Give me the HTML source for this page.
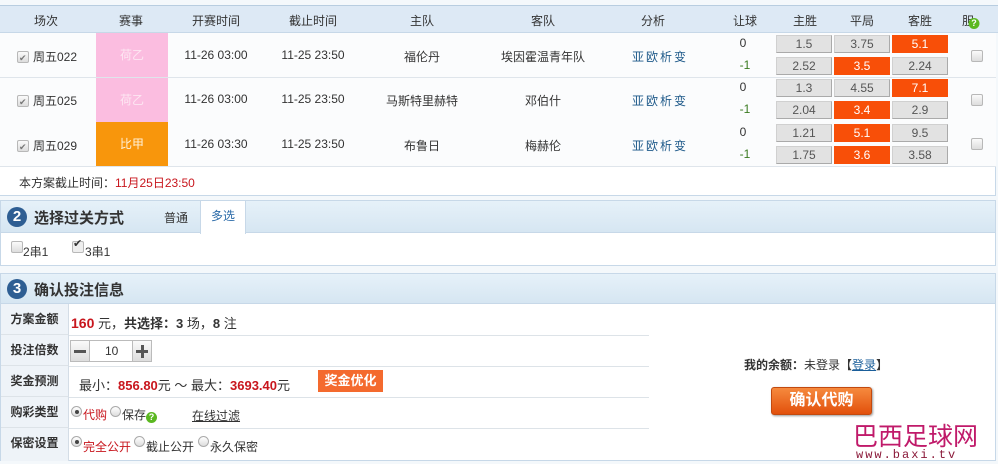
<!DOCTYPE html>
<html><head><meta charset="utf-8"><style>
*{margin:0;padding:0;box-sizing:border-box}
body{width:998px;height:464px;background:#f4f8fb;font-family:"Liberation Sans","Noto Sans CJK SC",sans-serif;font-size:12px;color:#333;position:relative;overflow:hidden}
.a{position:absolute}
.hd{left:0;top:5px;width:998px;height:28px;background:#dde9f5;border-top:1px solid #b8cde0;border-bottom:1px solid #c7d8e8}
.hd span{position:absolute;top:6px;transform:translateX(-50%);white-space:nowrap}
.row{left:0;width:996px;height:45px;background:#fbfcfd;border-bottom:1px solid #dfe5eb}
.t{position:absolute;transform:translateX(-50%);white-space:nowrap}
.lg{position:absolute;left:96px;width:72px;height:44px;top:0;color:#fff;text-align:center;line-height:44px}
.b{position:absolute;width:56px;height:18px;background:#e2e2e2;border:1px solid #d0d0d0;border-bottom-color:#aaa;border-right-color:#aaa;text-align:center;line-height:17px;color:#555;font-size:12px}
.o{background:#f84f08;border-color:#f84f08;color:#fff}
.cb{position:absolute;width:12px;height:12px;border:1px solid #b8b8b8;border-radius:2px;background:linear-gradient(#fafafa,#ddd)}
.ck{position:absolute;font-size:9px;color:#777;line-height:10px}
.sec{left:0;width:996px;border:1px solid #c7d8e8;background:#fff}
.sh{position:absolute;left:0;top:0;width:100%;height:32px;background:linear-gradient(#e6f1f9,#d6e6f2);border-bottom:1px solid #c7d8e8}
.num{position:absolute;left:6px;top:6px;width:20px;height:20px;border-radius:50%;background:#2e5e93;color:#fff;font-weight:bold;font-size:15px;text-align:center;line-height:20px}
.st{position:absolute;left:33px;top:6px;font-size:15px;font-weight:bold;color:#333}
.lab{position:absolute;left:0;width:68px;height:31px;background:#eef3f8;border-bottom:1px solid #dde3e8;border-right:1px solid #d4dde6;font-weight:bold;text-align:center;line-height:31px;font-size:12px}
.ln{position:absolute;left:68px;width:580px;height:1px;background:#dde3e8}
.r{position:absolute;width:11px;height:11px;border-radius:50%;border:1px solid #aaa;background:linear-gradient(#fff,#ddd)}
.r.on::after{content:"";position:absolute;left:3px;top:3px;width:4px;height:4px;border-radius:50%;background:#444}
.red{color:#c8161d}
.q{display:inline-block;width:11px;height:11px;border-radius:50%;background:#5bb821;color:#fff;font-size:9px;line-height:11px;text-align:center;font-weight:bold;vertical-align:-1px}
</style></head><body>
<div class="a hd">
<span style="left:46px">场次</span><span style="left:131px">赛事</span><span style="left:216px">开赛时间</span><span style="left:313px">截止时间</span><span style="left:422px">主队</span><span style="left:543px">客队</span><span style="left:653px">分析</span><span style="left:745px">让球</span><span style="left:805px">主胜</span><span style="left:862px">平局</span><span style="left:920px">客胜</span><span style="left:968px">胆<span class="q">?</span></span>
</div>

<div class="a row" style="top:33px">
<div class="cb" style="left:17px;top:18px"></div><span class="ck" style="left:19px;top:20px">✔</span><span class="t" style="left:55px;top:15px">周五022</span>
<div class="lg" style="background:#fbbde0;color:#fde6f2">荷乙</div>
<span class="t" style="left:216px;top:15px">11-26 03:00</span><span class="t" style="left:313px;top:15px">11-25 23:50</span>
<span class="t" style="left:422px;top:15px">福伦丹</span><span class="t" style="left:543px;top:15px">埃因霍温青年队</span>
<span class="t" style="left:660px;top:15px;color:#1f5a8a;letter-spacing:2px">亚欧析变</span>
<span class="t" style="left:743px;top:3px">0</span><span class="t" style="left:745px;top:25px;color:#3a7a20">-1</span>
<div class="b" style="left:776px;top:2px">1.5</div><div class="b" style="left:834px;top:2px">3.75</div><div class="b o" style="left:892px;top:2px">5.1</div>
<div class="b" style="left:776px;top:24px">2.52</div><div class="b o" style="left:834px;top:24px">3.5</div><div class="b" style="left:892px;top:24px">2.24</div>
<div class="cb" style="left:971px;top:17px"></div>
</div>
<div class="a row" style="top:78px">
<div class="cb" style="left:17px;top:17px"></div><span class="ck" style="left:19px;top:19px">✔</span><span class="t" style="left:55px;top:14px">周五025</span>
<div class="lg" style="background:#fbbde0;color:#fde6f2">荷乙</div>
<span class="t" style="left:216px;top:14px">11-26 03:00</span><span class="t" style="left:313px;top:14px">11-25 23:50</span>
<span class="t" style="left:422px;top:14px">马斯特里赫特</span><span class="t" style="left:543px;top:14px">邓伯什</span>
<span class="t" style="left:660px;top:14px;color:#1f5a8a;letter-spacing:2px">亚欧析变</span>
<span class="t" style="left:743px;top:2px">0</span><span class="t" style="left:745px;top:24px;color:#3a7a20">-1</span>
<div class="b" style="left:776px;top:1px">1.3</div><div class="b" style="left:834px;top:1px">4.55</div><div class="b o" style="left:892px;top:1px">7.1</div>
<div class="b" style="left:776px;top:23px">2.04</div><div class="b o" style="left:834px;top:23px">3.4</div><div class="b" style="left:892px;top:23px">2.9</div>
<div class="cb" style="left:971px;top:16px"></div>
</div>
<div class="a row" style="top:122px">
<div class="cb" style="left:17px;top:18px"></div><span class="ck" style="left:19px;top:20px">✔</span><span class="t" style="left:55px;top:15px">周五029</span>
<div class="lg" style="background:#f8960c;color:#fff3dc">比甲</div>
<span class="t" style="left:216px;top:15px">11-26 03:30</span><span class="t" style="left:313px;top:15px">11-25 23:50</span>
<span class="t" style="left:422px;top:15px">布鲁日</span><span class="t" style="left:543px;top:15px">梅赫伦</span>
<span class="t" style="left:660px;top:15px;color:#1f5a8a;letter-spacing:2px">亚欧析变</span>
<span class="t" style="left:743px;top:3px">0</span><span class="t" style="left:745px;top:25px;color:#3a7a20">-1</span>
<div class="b" style="left:776px;top:2px">1.21</div><div class="b o" style="left:834px;top:2px">5.1</div><div class="b" style="left:892px;top:2px">9.5</div>
<div class="b" style="left:776px;top:24px">1.75</div><div class="b o" style="left:834px;top:24px">3.6</div><div class="b" style="left:892px;top:24px">3.58</div>
<div class="cb" style="left:971px;top:16px"></div>
</div>
<div class="a" style="left:0;top:167px;width:996px;height:29px;background:#fff;border-bottom:1px solid #c7d8e8;border-right:1px solid #c7d8e8"><span class="a" style="left:19px;top:7px">本方案截止时间：<span class="red">11月25日23:50</span></span></div>

<div class="a sec" style="top:200px;height:66px">
<div class="sh"></div><div class="num">2</div><div class="st">选择过关方式</div>
<span class="a" style="left:163px;top:8px">普通</span>
<div class="a" style="left:199px;top:0;width:46px;height:33px;background:#fff;border-left:1px solid #c7d8e8;border-right:1px solid #c7d8e8;color:#2a6aa8;text-align:center;line-height:30px">多选</div>
<div class="cb" style="left:10px;top:40px"></div><span class="a" style="left:22px;top:42px">2串1</span>
<div class="cb" style="left:71px;top:40px;background:#eee"></div><span class="a" style="left:72px;top:36px;font-size:11px">✔</span><span class="a" style="left:84px;top:42px">3串1</span>
</div>

<div class="a sec" style="top:273px;height:188px">
<div class="sh" style="height:30px"></div><div class="num" style="top:5px">3</div><div class="st" style="top:5px">确认投注信息</div>
<div class="lab" style="top:30px">方案金额</div>
<div class="lab" style="top:61px">投注倍数</div>
<div class="lab" style="top:92px">奖金预测</div>
<div class="lab" style="top:123px">购彩类型</div>
<div class="lab" style="top:154px;height:33px;border-bottom:0">保密设置</div>
<div class="ln" style="top:61px"></div><div class="ln" style="top:92px"></div><div class="ln" style="top:123px"></div><div class="ln" style="top:154px"></div>
<span class="a" style="left:70px;top:39px;font-size:13px"><b class="red" style="font-size:14px">160</b> 元，<b>共选择：3</b> 场，<b>8</b> 注</span>
<div class="a" style="left:69px;top:66px;width:82px;height:22px;border:1px solid #bbb;background:#fff"></div>
<div class="a" style="left:69px;top:66px;width:20px;height:22px;background:linear-gradient(#fafafa,#ddd);border:1px solid #bbb"><div class="a" style="left:3px;top:9px;width:12px;height:3px;background:#555"></div></div>
<span class="a" style="left:104px;top:70px">10</span>
<div class="a" style="left:131px;top:66px;width:20px;height:22px;background:linear-gradient(#fafafa,#ddd);border:1px solid #bbb"><div class="a" style="left:3px;top:9px;width:12px;height:3px;background:#555"></div><div class="a" style="left:7.5px;top:4px;width:3px;height:13px;background:#555"></div></div>
<span class="a" style="left:78px;top:101px;font-size:13px">最小：<b class="red">856.80</b>元 ～ 最大：<b class="red">3693.40</b>元</span>
<div class="a" style="left:317px;top:96px;width:65px;height:22px;background:#f46a2e;color:#fff;font-weight:bold;text-align:center;line-height:22px;font-size:13px">奖金优化</div>
<div class="r on" style="left:70px;top:132px"></div><span class="a red" style="left:82px;top:132px">代购</span>
<div class="r" style="left:109px;top:132px"></div><span class="a" style="left:121px;top:132px">保存<span class="q">?</span></span>
<span class="a" style="left:191px;top:133px;text-decoration:underline">在线过滤</span>
<div class="r on" style="left:70px;top:162px"></div><span class="a red" style="left:82px;top:164px">完全公开</span>
<div class="r" style="left:133px;top:162px"></div><span class="a" style="left:145px;top:164px">截止公开</span>
<div class="r" style="left:197px;top:162px"></div><span class="a" style="left:209px;top:164px">永久保密</span>
<span class="a" style="left:743px;top:82px"><b>我的余额：</b>未登录【<span style="color:#1a5e9a;text-decoration:underline">登录</span>】</span>
<div class="a" style="left:770px;top:113px;width:101px;height:28px;border-radius:3px;background:linear-gradient(#f68a3e,#e2500c);border:1px solid #c24a0f;color:#fff;font-weight:bold;font-size:16px;text-align:center;line-height:26px;box-shadow:1px 1px 2px #999">确认代购</div>
<span class="a" style="left:852px;top:150px;font-size:25px;color:#c01a6a;line-height:26px;letter-spacing:0px">巴西足球网</span>
<span class="a" style="left:855px;top:175px;font-size:12px;color:#8a1838;font-family:'Liberation Mono',monospace;letter-spacing:2px;line-height:13px">www.baxi.tv</span>
</div>
</body></html>
